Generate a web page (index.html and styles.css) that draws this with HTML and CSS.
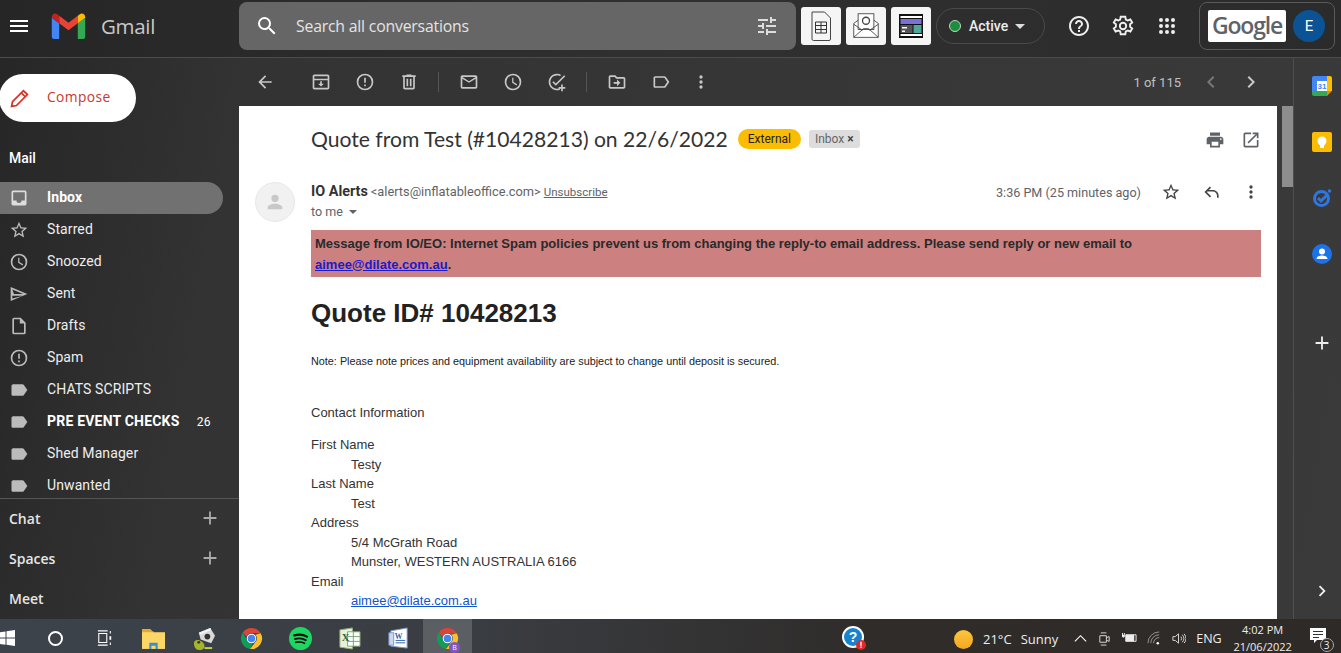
FILE: index.html
```html
<!DOCTYPE html>
<html lang="en">
<head>
    <meta charset="UTF-8">
    <meta name="viewport" content="width=device-width, initial-scale=1.0">
    <title>Gmail - Quote from Test</title>
    <link rel="stylesheet" href="styles.css">
</head>
<body>
    <!-- Shared icons -->
    <svg class="sprite" xmlns="http://www.w3.org/2000/svg">
        <symbol id="i-back" viewBox="0 0 24 24"><path d="M20 11H7.83l5.59-5.59L12 4l-8 8 8 8 1.41-1.41L7.83 13H20v-2z"/></symbol>
        <symbol id="i-archive" viewBox="0 0 24 24"><path d="M20 3H4c-1.1 0-2 .9-2 2v14c0 1.1.9 2 2 2h16c1.1 0 2-.9 2-2V5c0-1.1-.9-2-2-2zM4 5h16v3H4V5zm0 14V10h16v9H4zm9-8h-2v3H8.5l3.5 3.5 3.5-3.5H13v-3z"/></symbol>
        <symbol id="i-report" viewBox="0 0 24 24"><path d="M12 2a10 10 0 1 0 0 20 10 10 0 0 0 0-20zm0 18a8 8 0 1 1 0-16 8 8 0 0 1 0 16zm-1-5h2v2h-2v-2zm0-8h2v6h-2V7z"/></symbol>
        <symbol id="i-delete" viewBox="0 0 24 24"><path d="M15 4V3H9v1H4v2h1v13c0 1.1.9 2 2 2h10c1.1 0 2-.9 2-2V6h1V4h-5zm2 15H7V6h10v13zM9 8h2v9H9V8zm4 0h2v9h-2V8z"/></symbol>
        <symbol id="i-mail" viewBox="0 0 24 24"><path d="M20 4H4c-1.1 0-2 .9-2 2v12c0 1.1.9 2 2 2h16c1.1 0 2-.9 2-2V6c0-1.1-.9-2-2-2zm0 14H4V8l8 5 8-5v10zm-8-7L4 6h16l-8 5z"/></symbol>
        <symbol id="i-clock" viewBox="0 0 24 24"><path d="M12 2a10 10 0 1 0 0 20 10 10 0 0 0 0-20zm0 18a8 8 0 1 1 0-16 8 8 0 0 1 0 16zm.5-13H11v6l5.2 3.1.8-1.3-4.5-2.7V7z"/></symbol>
        <symbol id="i-task" viewBox="0 0 24 24"><path d="M22 5.18 10.59 16.6l-4.24-4.24 1.41-1.41 2.83 2.83 10-10L22 5.18zM12 20a8 8 0 0 1-8-8 8 8 0 0 1 11.6-7.1l1.45-1.45A10 10 0 0 0 2 12a10 10 0 0 0 13.5 9.37v-2.2A8 8 0 0 1 12 20zm7-5h-2v3h-3v2h3v3h2v-3h3v-2h-3v-3z"/></symbol>
        <symbol id="i-move" viewBox="0 0 24 24"><path d="M20 6h-8l-2-2H4c-1.1 0-2 .9-2 2v12c0 1.1.9 2 2 2h16c1.1 0 2-.9 2-2V8c0-1.1-.9-2-2-2zm0 12H4V6h5.17l2 2H20v10zm-8-1 4-4-4-4v3H8v2h4v3z"/></symbol>
        <symbol id="i-label" viewBox="0 0 24 24"><path d="M17.63 5.84C17.27 5.33 16.67 5 16 5L5 5.01C3.9 5.01 3 5.9 3 7v10c0 1.1.9 1.99 2 1.99L16 19c.67 0 1.27-.33 1.63-.84L22 12l-4.37-6.16zM16 17H5V7h11l3.55 5L16 17z"/></symbol>
        <symbol id="i-label-fill" viewBox="0 0 24 24"><path d="M17.63 5.84C17.27 5.33 16.67 5 16 5L5 5.01C3.9 5.01 3 5.9 3 7v10c0 1.1.9 1.99 2 1.99L16 19c.67 0 1.27-.33 1.63-.84L22 12l-4.37-6.16z"/></symbol>
        <symbol id="i-more" viewBox="0 0 24 24"><path d="M12 8a2 2 0 1 0 0-4 2 2 0 0 0 0 4zm0 2a2 2 0 1 0 0 4 2 2 0 0 0 0-4zm0 6a2 2 0 1 0 0 4 2 2 0 0 0 0-4z"/></symbol>
        <symbol id="i-star" viewBox="0 0 24 24"><path d="m22 9.24-7.19-.62L12 2 9.19 8.63 2 9.24l5.46 4.73L5.82 21 12 17.27 18.18 21l-1.63-7.03L22 9.24zM12 15.4l-3.76 2.27 1-4.28-3.32-2.88 4.38-.38L12 6.1l1.71 4.04 4.38.38-3.32 2.88 1 4.28L12 15.4z"/></symbol>
        <symbol id="i-plus" viewBox="0 0 24 24"><path d="M19 13h-6v6h-2v-6H5v-2h6V5h2v6h6v2z"/></symbol>
        <symbol id="i-chrome" viewBox="0 0 24 24">
            <path fill="#db4437" d="M12 1a11 11 0 0 1 9.53 5.5H12A5.5 5.5 0 0 0 6.8 10.2L2.9 5.8A11 11 0 0 1 12 1z"/>
            <path fill="#0f9d58" d="M2.9 5.8l4.76 8.2A5.5 5.5 0 0 0 13.3 17.35L10.4 22.9A11 11 0 0 1 2.9 5.8z"/>
            <path fill="#fbc02d" d="M21.53 6.5A11 11 0 0 1 10.4 22.9L16.8 14.75A5.5 5.5 0 0 0 16 8l5.53-1.5z"/>
            <circle cx="12" cy="12" r="5" fill="#fff"/><circle cx="12" cy="12" r="4" fill="#4285f4"/>
        </symbol>
    </svg>

    <div class="app">
        <!-- Top bar -->
        <header class="topbar">
            <div class="brand">
                <svg class="menu-icon" viewBox="0 0 24 24"><path d="M3 18h18v-2H3v2zm0-5h18v-2H3v2zm0-7v2h18V6H3z"/></svg>
                <svg class="gmail-logo" viewBox="0 0 36 28">
                    <path fill="#4285f4" d="M0 5v20.5A2.5 2.5 0 0 0 2.5 28H8V11L0 5z"/>
                    <path fill="#34a853" d="M28 11v17h5.5a2.5 2.5 0 0 0 2.5-2.5V5l-8 6z"/>
                    <path fill="#ea4335" d="M8 11V3l10 7.5L28 3v8l-10 7.5L8 11z"/>
                    <path fill="#c5221f" d="M0 4.5V5l8 6V3L5.8 1.3C3.3-.6 0 1.3 0 4.5z"/>
                    <path fill="#fbbc04" d="M28 3v8l8-6v-.5c0-3.2-3.3-5.1-5.8-3.2L28 3z"/>
                </svg>
                <span class="gmail-word">Gmail</span>
            </div>
            <div class="search-bar">
                <svg class="search-icon" viewBox="0 0 24 24"><path d="M15.5 14h-.79l-.28-.27A6.471 6.471 0 0 0 16 9.5 6.5 6.5 0 1 0 9.5 16c1.61 0 3.09-.59 4.23-1.57l.27.28v.79l5 4.99L20.49 19l-4.99-5zm-6 0C7.01 14 5 11.99 5 9.5S7.01 5 9.5 5 14 7.01 14 9.5 11.99 14 9.5 14z"/></svg>
                <span class="search-text">Search all conversations</span>
                <svg class="tune-icon" viewBox="0 0 24 24"><path d="M3 17v2h6v-2H3zM3 5v2h10V5H3zm10 16v-2h8v-2h-8v-2h-2v6h2zM7 9v2H3v2h4v2h2V9H7zm14 4v-2H11v2h10zm-6-4h2V7h4V5h-4V3h-2v6z"/></svg>
            </div>
            <div class="ext-icon">
                <svg viewBox="0 0 24 30" width="24" height="30"><path fill="none" stroke="#444" d="M3 1h12.5l6 6v21a1.5 1.5 0 0 1-1.5 1.5H4.5A1.5 1.5 0 0 1 3 28z"/><path fill="none" stroke="#333" d="M6.5 11h11v11h-11zM6.5 14.5h11M6.5 18.5h11M12 11v11"/></svg>
            </div>
            <div class="ext-icon">
                <svg viewBox="0 0 32 32" width="28" height="30"><path fill="#fff" stroke="#444" d="M2 13 16 3l14 10v16H2z"/><rect x="7" y="2" width="18" height="18" fill="#fff" stroke="#444"/><circle cx="16" cy="10" r="4" fill="none" stroke="#444" stroke-width="1.5"/><path fill="none" stroke="#444" d="M2 29l11-10h6l11 10M2 14l10 7M30 14l-10 7"/></svg>
            </div>
            <div class="ext-icon">
                <svg viewBox="0 0 24 24" width="24" height="24"><path fill="#111" d="M0 0h24v24H0z"/><path fill="#fff" d="M1.5 2H23v2H1.5zM1.5 20H23v2H1.5z"/><path fill="#7b70d8" d="M1.5 5h21v5h-21z"/><path fill="#555" d="M1.5 11h12v8h-12z"/><path fill="#4fa69a" d="M14.5 11h8v8h-8z"/><path fill="#fff" d="M3 13h5v1.5H3zM3 16.5h3V18H3z"/></svg>
            </div>
            <div class="status-pill">
                <span class="status-dot"></span>
                <span class="status-text">Active</span>
                <span class="caret"></span>
            </div>
            <div class="top-actions">
                <svg viewBox="0 0 24 24"><path d="M11 18h2v-2h-2v2zm1-16C6.48 2 2 6.48 2 12s4.48 10 10 10 10-4.48 10-10S17.52 2 12 2zm0 18c-4.41 0-8-3.59-8-8s3.59-8 8-8 8 3.59 8 8-3.59 8-8 8zm0-14c-2.21 0-4 1.79-4 4h2c0-1.1.9-2 2-2s2 .9 2 2c0 2-3 1.75-3 5h2c0-2.25 3-2.5 3-5 0-2.21-1.79-4-4-4z"/></svg>
                <svg viewBox="0 0 24 24"><path fill="none" stroke="currentColor" stroke-width="1.9" d="M12 2.8l2.3 0 .5 2.7 2 1 2.6-1 1.8 3-2.1 1.8v2.4l2.1 1.8-1.8 3-2.6-1-2 1-.5 2.7H9.7l-.5-2.7-2-1-2.6 1-1.8-3 2.1-1.8v-2.4L2.8 8.5l1.8-3 2.6 1 2-1 .5-2.7z"/><circle cx="12" cy="12" r="3.2" fill="none" stroke="currentColor" stroke-width="1.9"/></svg>
                <svg viewBox="0 0 24 24"><path d="M6 8a2 2 0 1 0 0-4 2 2 0 0 0 0 4zm6 12a2 2 0 1 0 0-4 2 2 0 0 0 0 4zm-6 0a2 2 0 1 0 0-4 2 2 0 0 0 0 4zm0-6a2 2 0 1 0 0-4 2 2 0 0 0 0 4zm6 0a2 2 0 1 0 0-4 2 2 0 0 0 0 4zm4-8a2 2 0 1 0 4 0 2 2 0 0 0-4 0zm-4 2a2 2 0 1 0 0-4 2 2 0 0 0 0 4zm6 6a2 2 0 1 0 0-4 2 2 0 0 0 0 4zm0 6a2 2 0 1 0 0-4 2 2 0 0 0 0 4z"/></svg>
            </div>
            <div class="account-box">
                <div class="google-word">Google</div>
                <div class="account-avatar">E</div>
            </div>
        </header>

        <div class="workspace">
            <!-- Left sidebar -->
            <aside class="sidebar">
                <div class="compose">
                    <svg viewBox="0 0 24 24"><path fill="none" stroke="#d93025" stroke-width="2" d="M3 21l1-5.500L16.500 3 21 7.500 8.500 20z"/><path stroke="#d93025" stroke-width="2" d="M14 5.500l4.500 4.500"/></svg>
                    <span>Compose</span>
                </div>
                <div class="mail-title">Mail</div>
                <nav class="nav-list">
                    <div class="nav-item active">
                        <svg viewBox="0 0 24 24"><path d="M19 3H5a2 2 0 0 0-2 2v14a2 2 0 0 0 2 2h14a2 2 0 0 0 2-2V5a2 2 0 0 0-2-2zm0 12h-4a3 3 0 0 1-6 0H5V5h14v10z"/></svg>
                        <span>Inbox</span>
                    </div>
                    <div class="nav-item"><svg viewBox="0 0 24 24"><use href="#i-star"/></svg><span>Starred</span></div>
                    <div class="nav-item"><svg viewBox="0 0 24 24"><use href="#i-clock"/></svg><span>Snoozed</span></div>
                    <div class="nav-item">
                        <svg viewBox="0 0 24 24"><path d="M2 3.5v17L22 12 2 3.5zm2 3l12.9 5.5H6l-2-5.5zm0 11V14h12.9L4 17.5z"/></svg>
                        <span>Sent</span>
                    </div>
                    <div class="nav-item">
                        <svg viewBox="0 0 24 24"><path d="M14 2H6a2 2 0 0 0-2 2v16a2 2 0 0 0 2 2h12a2 2 0 0 0 2-2V8l-6-6zm4 18H6V4h7v5h5v11z"/></svg>
                        <span>Drafts</span>
                    </div>
                    <div class="nav-item"><svg viewBox="0 0 24 24"><use href="#i-report"/></svg><span>Spam</span></div>
                    <div class="nav-item"><svg viewBox="0 0 24 24"><use href="#i-label-fill"/></svg><span>CHATS SCRIPTS</span></div>
                    <div class="nav-item unread"><svg viewBox="0 0 24 24"><use href="#i-label-fill"/></svg><span>PRE EVENT CHECKS</span><em>26</em></div>
                    <div class="nav-item"><svg viewBox="0 0 24 24"><use href="#i-label-fill"/></svg><span>Shed Manager</span></div>
                    <div class="nav-item"><svg viewBox="0 0 24 24"><use href="#i-label-fill"/></svg><span>Unwanted</span></div>
                </nav>
                <div class="side-sections">
                    <div class="side-row"><span>Chat</span><svg viewBox="0 0 24 24"><use href="#i-plus"/></svg></div>
                    <div class="side-row"><span>Spaces</span><svg viewBox="0 0 24 24"><use href="#i-plus"/></svg></div>
                    <div class="side-row"><span>Meet</span></div>
                </div>
            </aside>

            <!-- Message column -->
            <main class="main">
                <div class="toolbar">
                    <svg class="tool back" viewBox="0 0 24 24"><use href="#i-back"/></svg>
                    <svg class="tool" viewBox="0 0 24 24"><use href="#i-archive"/></svg>
                    <svg class="tool" viewBox="0 0 24 24"><use href="#i-report"/></svg>
                    <svg class="tool" viewBox="0 0 24 24"><use href="#i-delete"/></svg>
                    <span class="tool-sep"></span>
                    <svg class="tool" viewBox="0 0 24 24"><use href="#i-mail"/></svg>
                    <svg class="tool" viewBox="0 0 24 24"><use href="#i-clock"/></svg>
                    <svg class="tool" viewBox="0 0 24 24"><use href="#i-task"/></svg>
                    <span class="tool-sep"></span>
                    <svg class="tool" viewBox="0 0 24 24"><use href="#i-move"/></svg>
                    <svg class="tool" viewBox="0 0 24 24"><use href="#i-label"/></svg>
                    <svg class="tool tight" viewBox="0 0 24 24"><use href="#i-more"/></svg>
                    <span class="pager">1 of 115</span>
                    <svg class="tool chevron dim" viewBox="0 0 24 24"><path d="M15.41 7.41 14 6l-6 6 6 6 1.41-1.41L10.83 12z"/></svg>
                    <svg class="tool chevron" viewBox="0 0 24 24"><path d="M8.59 16.59 10 18l6-6-6-6-1.41 1.41L13.17 12z"/></svg>
                </div>
                <div class="scroll-wrap">
                    <article class="message">
                        <div class="subject-row">
                            <h1>Quote from Test (#10428213) on 22/6/2022</h1>
                            <span class="badge-external">External</span>
                            <span class="badge-inbox">Inbox <b>×</b></span>
                            <span class="subject-actions">
                                <svg viewBox="0 0 24 24"><path d="M19 8H5c-1.66 0-3 1.34-3 3v6h4v4h12v-4h4v-6c0-1.66-1.34-3-3-3zm-3 11H8v-5h8v5zm3-7c-.55 0-1-.45-1-1s.45-1 1-1 1 .45 1 1-.45 1-1 1zm-1-9H6v4h12V3z"/></svg>
                                <svg viewBox="0 0 24 24"><path d="M19 19H5V5h7V3H5a2 2 0 0 0-2 2v14a2 2 0 0 0 2 2h14c1.1 0 2-.9 2-2v-7h-2v7zM14 3v2h3.59l-9.83 9.83 1.41 1.41L19 6.41V10h2V3h-7z"/></svg>
                            </span>
                        </div>
                        <div class="sender-row">
                            <div class="sender-avatar">
                                <svg viewBox="0 0 24 24"><path d="M12 12a4 4 0 1 0 0-8 4 4 0 0 0 0 8zm0 2c-2.7 0-8 1.3-8 4v2h16v-2c0-2.7-5.3-4-8-4z"/></svg>
                            </div>
                            <div class="sender-info">
                                <div class="sender-line">
                                    <b>IO Alerts</b> <small>&lt;alerts@inflatableoffice.com&gt;</small> <u>Unsubscribe</u>
                                </div>
                                <div class="to-line">to me <span class="caret small"></span></div>
                            </div>
                            <div class="sender-meta">
                                <span class="sent-time">3:36 PM (25 minutes ago)</span>
                                <svg viewBox="0 0 24 24"><use href="#i-star"/></svg>
                                <svg class="reply-icon" viewBox="0 0 24 24"><path d="M9.5 5.5 3 12l6.5 6.5 1.4-1.400L5.8 12l5.100-5.100zM20 19v-2.500c0-4-3.200-7-7-7H6v2h7c2.800 0 5 2.200 5 5V19z"/></svg>
                                <svg viewBox="0 0 24 24"><use href="#i-more"/></svg>
                            </div>
                        </div>
                        <div class="email-body">
                            <div class="notice">Message from IO/EO: Internet Spam policies prevent us from changing the reply-to email address. Please send reply or new email to <a href="#">aimee@dilate.com.au</a>.</div>
                            <h2>Quote ID# 10428213</h2>
                            <p class="note">Note: Please note prices and equipment availability are subject to change until deposit is secured.</p>
                            <p class="contact-title">Contact Information</p>
                            <dl class="contact">
                                <dt>First Name</dt>
                                <dd>Testy</dd>
                                <dt>Last Name</dt>
                                <dd>Test</dd>
                                <dt>Address</dt>
                                <dd>5/4 McGrath Road</dd>
                                <dd>Munster, WESTERN AUSTRALIA 6166</dd>
                                <dt>Email</dt>
                                <dd><a class="mail-link" href="#">aimee@dilate.com.au</a></dd>
                            </dl>
                        </div>
                    </article>
                    <div class="scrollbar"><div class="scroll-thumb"></div></div>
                </div>
            </main>

            <!-- Right add-ons rail -->
            <aside class="rail">
                <svg viewBox="0 0 20 20"><path fill="#4285f4" d="M0 2a2 2 0 0 1 2-2h13v5H5v10H0z"/><path fill="#fbbc04" d="M15 0h3a2 2 0 0 1 2 2v13h-5z"/><path fill="#34a853" d="M0 15h15v5H2a2 2 0 0 1-2-2z"/><path fill="#ea8600" d="M15 15h5l-5 5z"/><path fill="#fff" d="M5 5h10v10H5z"/><text x="10" y="13" class="cal-num">31</text></svg>
                <svg viewBox="0 0 20 20"><rect width="20" height="20" rx="2" fill="#fbbc04"/><circle cx="10" cy="9" r="4.5" fill="#fff"/><path fill="#fff" d="M8 13h4v3H8z"/></svg>
                <svg viewBox="0 0 20 20"><circle cx="9.5" cy="10.5" r="7" fill="none" stroke="#2f76e0" stroke-width="3"/><path fill="none" stroke="#2f76e0" stroke-width="3" d="M6 10l3 3 7-7"/><circle cx="17.5" cy="3" r="1.8" fill="#2f76e0"/></svg>
                <svg viewBox="0 0 20 20"><circle cx="10" cy="10" r="10" fill="#1a73e8"/><circle cx="10" cy="7.5" r="3" fill="#fff"/><path fill="#fff" d="M4.5 15c0-2.5 3-3.5 5.5-3.5s5.5 1 5.5 3.5z"/></svg>
                <span class="rail-sep"></span>
                <svg class="rail-plus" viewBox="0 0 24 24"><use href="#i-plus"/></svg>
                <svg class="rail-next" viewBox="0 0 24 24"><path d="M8.59 16.59 10 18l6-6-6-6-1.41 1.41L13.17 12z"/></svg>
            </aside>
        </div>
    </div>

    <!-- Windows taskbar -->
    <footer class="taskbar">
        <div class="task-start">
            <svg viewBox="0 0 16 16"><path d="M0 2.3 6.5 1.4v6.2H0zM7.5 1.2 16 0v7.6H7.5zM0 8.5h6.5v6.2L0 13.8zM7.5 8.5H16V16l-8.5-1.2z"/></svg>
        </div>
        <div class="task-slot"><span class="cortana"></span></div>
        <div class="task-slot">
            <svg viewBox="0 0 18 18" class="task-view"><path fill="none" stroke="#fff" stroke-width="1.2" d="M1 1h11M1 17h11M2 4h9v10H2zM15 1v3M15 14v3"/><path fill="#fff" d="M14 7h2v4h-2z"/></svg>
        </div>
        <div class="task-slot">
            <svg viewBox="0 0 22 20" class="task-app"><path fill="#e8a825" d="M0 1h8l2 2h1v2H0z"/><path fill="#fcd768" d="M0 4h22v16H0z"/><path fill="#3a8fc7" d="M7 14h8v6h-2v-3H9v3H7z"/></svg>
        </div>
        <div class="task-slot">
            <svg viewBox="0 0 24 24" class="task-app camera"><path fill="#d9d9d9" d="M6 6l12-5 5 8-4 8-11-4z"/><path fill="#f2f2f2" d="M6 6l12-5 1 2L8 8z"/><circle cx="15" cy="10" r="3" fill="#333"/><path fill="#a5b52a" d="M1 17c0-3 3-4 6-3s5 3 5 6-3 4-6 4-5-3-5-7z"/><circle cx="6" cy="16" r="1.5" fill="#333"/><path fill="#c8d048" d="M12 21h8v2h-8z"/></svg>
        </div>
        <div class="task-slot"><svg viewBox="0 0 24 24" class="task-app"><use href="#i-chrome"/></svg></div>
        <div class="task-slot">
            <svg viewBox="0 0 24 24" class="task-app"><circle cx="12" cy="12" r="12" fill="#1ed760"/><path fill="none" stroke="#111" stroke-linecap="round" stroke-width="2.3" d="M5.5 8.8c4.5-1.3 9.5-1 13.3 1.2"/><path fill="none" stroke="#111" stroke-linecap="round" stroke-width="2" d="M6.3 12.5c3.8-1 8-.7 11.2 1.2"/><path fill="none" stroke="#111" stroke-linecap="round" stroke-width="1.7" d="M7 16c3-.8 6.5-.5 9.2 1"/></svg>
        </div>
        <div class="task-slot">
            <svg viewBox="0 0 24 24" class="task-app"><path fill="#e8f0dc" stroke="#8fb27a" d="M2 3l13-2v22L2 21z"/><path fill="#fff" stroke="#7aa56a" d="M10 5h13v15H10z"/><path stroke="#7aa56a" d="M10 10h13M10 15h13M16 5v15"/><text x="4" y="15" class="excel-x">X</text></svg>
        </div>
        <div class="task-slot">
            <svg viewBox="0 0 24 24" class="task-app"><path fill="#fff" stroke="#7a98cc" d="M4 4l17-3v21L4 20z"/><path fill="#c9d8f0" stroke="#7a98cc" d="M2 6h5v13H2z"/><path stroke="#2f5fa8" d="M9 14h10M9 16.5h10"/><text x="8" y="12" class="word-w">W</text></svg>
        </div>
        <div class="task-slot current">
            <svg viewBox="0 0 24 24" class="task-app"><use href="#i-chrome"/></svg>
            <span class="profile-b">B</span>
        </div>

        <div class="task-help">
            <svg viewBox="0 0 24 24"><circle cx="11" cy="11" r="11" fill="#fff"/><circle cx="11" cy="11" r="9" fill="#1583cf"/><text x="11" y="16" class="help-q">?</text><circle cx="19" cy="19" r="5" fill="#e02a2a"/><path fill="#fff" d="M18.3 15.8h1.4v4h-1.4zM18.3 20.6h1.4V22h-1.4z"/></svg>
        </div>
        <div class="weather">
            <span class="sun"></span>
            <span class="temp">21°C</span>
            <span class="sky">Sunny</span>
        </div>
        <div class="tray">
            <svg viewBox="0 0 16 16" class="tray-up"><path fill="none" stroke="#fff" stroke-width="1.2" d="M2 11l6-6 6 6"/></svg>
            <svg viewBox="0 0 16 16"><path fill="none" stroke="#ddd" d="M3 5h7v7H3zM10 7l3-1v5l-3-1M4 2h6M4 15h6"/></svg>
            <svg viewBox="0 0 18 16" class="tray-batt"><path fill="none" stroke="#eee" d="M5 4h11v7H5z"/><path fill="#eee" d="M5 4h9v7H5zM1 2h1v2H1zM3 2h1v2H3zM1 4h3v2L3 7H2L1 6z"/></svg>
            <svg viewBox="0 0 16 16"><path fill="none" stroke="#999" d="M1 13a12 12 0 0 1 12-12M4 13a9 9 0 0 1 9-9M7 13a6 6 0 0 1 6-6"/><circle cx="11.5" cy="13" r="1.4" fill="#fff"/></svg>
            <svg viewBox="0 0 16 16"><path fill="none" stroke="#ddd" d="M2 6h2.5L8 3v10l-3.5-3H2zM10.5 6a3 3 0 0 1 0 4M12 4a6 6 0 0 1 0 8M14 3a8 8 0 0 1 0 10"/></svg>
        </div>
        <span class="lang">ENG</span>
        <div class="clock">
            <div>4:02 PM</div>
            <div>21/06/2022</div>
        </div>
        <div class="notify">
            <svg viewBox="0 0 18 18"><path fill="#fff" d="M1 1h16v12H8l-3 3v-3H1z"/><path stroke="#333" d="M4 4.5h10M4 7.5h10M4 10.5h6"/></svg>
            <span class="notify-count">3</span>
        </div>
    </footer>
</body>
</html>
```

FILE: styles.css
```css
* {
    margin: 0;
    padding: 0;
    box-sizing: border-box;
}

html, body {
    width: 1341px;
    height: 653px;
    overflow: hidden;
}

body {
    display: flex;
    flex-direction: column;
    font-family: Roboto, "Liberation Sans", sans-serif;
    background-color: #333;
    color: #fff;
}

svg {
    fill: currentColor;
    flex-shrink: 0;
}

.sprite {
    display: none;
}

.app {
    height: 619px;
    display: flex;
    flex-direction: column;
    background: linear-gradient(100deg, #262626 0%, #333 18%, #3a3a3a 100%);
    overflow: hidden;
}

/* Top bar */
.topbar {
    height: 58px;
    flex-shrink: 0;
    display: flex;
    align-items: flex-start;
    border-bottom: 1px solid #4c4c4c;
    background: linear-gradient(90deg, #262626 0%, #303030 50%, #2b2b2b 100%);
}

.brand {
    width: 239px;
    height: 52px;
    display: flex;
    align-items: center;
    flex-shrink: 0;
}

.menu-icon {
    width: 24px;
    height: 24px;
    margin-left: 7px;
    color: #fff;
}

.gmail-logo {
    width: 35px;
    height: 26px;
    margin-left: 20px;
}

.gmail-word {
    margin-left: 15px;
    font-family: "Open Sans", sans-serif;
    font-size: 20.5px;
    color: #c8c8c8;
    letter-spacing: -0.3px;
}

.search-bar {
    width: 557px;
    height: 48px;
    margin-top: 2px;
    background-color: #666;
    border-radius: 8px;
    display: flex;
    align-items: center;
    padding: 0 17px 0 16px;
    flex-shrink: 0;
}

.search-icon {
    width: 24px;
    height: 24px;
}

.search-text {
    margin-left: 17px;
    font-family: "Open Sans", sans-serif;
    font-size: 15.8px;
    letter-spacing: -0.2px;
    color: #e4e4e4;
    flex-grow: 1;
}

.tune-icon {
    width: 24px;
    height: 24px;
    color: #ddd;
}

.ext-icon {
    width: 40px;
    height: 38px;
    margin: 7px 0 0 5px;
    background-color: #f5f5f5;
    border-radius: 3px;
    display: flex;
    align-items: center;
    justify-content: center;
}

.status-pill {
    width: 109px;
    height: 36px;
    margin: 8px 0 0 5px;
    border: 1px solid #4a4a4a;
    border-radius: 18px;
    display: flex;
    align-items: center;
    padding-left: 12px;
}

.status-dot {
    width: 12px;
    height: 12px;
    border-radius: 50%;
    background-color: #1e8e3e;
    border: 1px solid #b8d8c0;
}

.status-text {
    margin-left: 8px;
    font-size: 14px;
    font-weight: 500;
    color: #eee;
}

.caret {
    width: 0;
    height: 0;
    margin-left: 7px;
    border-left: 5px solid transparent;
    border-right: 5px solid transparent;
    border-top: 5px solid #ddd;
}

.top-actions {
    display: flex;
    gap: 20px;
    margin: 14px 0 0 22px;
    color: #eee;
}

.top-actions svg {
    width: 24px;
    height: 24px;
}

.account-box {
    width: 136px;
    height: 48px;
    margin: 2px 0 0 20px;
    border: 1px solid #5a5a5a;
    border-radius: 8px;
    display: flex;
    align-items: center;
    padding-left: 8px;
}

.google-word {
    width: 78px;
    height: 32px;
    background-color: #fff;
    border-radius: 2px;
    color: #5f6368;
    font-family: "Open Sans", sans-serif;
    font-size: 23px;
    font-weight: 600;
    line-height: 31px;
    text-align: center;
    letter-spacing: -1.2px;
}

.account-avatar {
    width: 32px;
    height: 32px;
    margin-left: 7px;
    background-color: #0b5394;
    border-radius: 50%;
    text-align: center;
    font-size: 15px;
    line-height: 33px;
    color: #fff;
}

.workspace {
    flex-grow: 1;
    display: flex;
    min-height: 0;
}

/* Left sidebar */
.sidebar {
    width: 239px;
    flex-shrink: 0;
    display: flex;
    flex-direction: column;
}

.compose {
    width: 137px;
    height: 48px;
    margin: 16px 0 0 -1px;
    background-color: #fff;
    border-radius: 24px;
    display: flex;
    align-items: center;
    padding-left: 10px;
    color: #c5392f;
    font-family: "Open Sans", sans-serif;
    font-size: 13.8px;
    letter-spacing: 0.4px;
}

.compose span {
    margin-bottom: 3px;
}

.compose svg {
    width: 21px;
    height: 21px;
    margin-right: 17px;
}

.mail-title {
    margin: 28px 0 0 9px;
    font-size: 14px;
    font-weight: 500;
    line-height: 16px;
}

.nav-list {
    margin-top: 16px;
    height: 317px;
    overflow: hidden;
    border-bottom: 1px solid #555;
}

.nav-item {
    width: 223px;
    height: 32px;
    display: flex;
    align-items: center;
    padding-left: 9px;
    font-size: 14px;
    letter-spacing: 0.1px;
    color: #eee;
    border-radius: 0 16px 16px 0;
}

.nav-item span {
    margin-bottom: 2px;
}

.nav-item svg {
    width: 20px;
    height: 20px;
    margin-right: 18px;
    color: #bbb;
}

.nav-item.active {
    background-color: #717171;
    font-weight: 700;
    color: #fff;
}

.nav-item.active svg {
    color: #ddd;
}

.nav-item.unread {
    font-weight: 700;
    color: #fff;
    letter-spacing: 0.2px;
}

.nav-item em {
    margin-left: auto;
    margin-right: 12px;
    font-style: normal;
    font-weight: 400;
    font-size: 12px;
    letter-spacing: 0.4px;
}

.side-sections {
    display: flex;
    flex-direction: column;
    margin-top: -1px;
}

.side-row {
    height: 40px;
    display: flex;
    align-items: center;
    justify-content: space-between;
    padding: 0 18px 0 9px;
    font-family: "Open Sans", sans-serif;
    font-size: 14px;
    font-weight: 600;
    color: #e6e6e6;
}

.side-row svg {
    width: 22px;
    height: 22px;
    color: #aaa;
}

/* Main column */
.main {
    flex-grow: 1;
    display: flex;
    flex-direction: column;
    min-width: 0;
}

.toolbar {
    height: 48px;
    flex-shrink: 0;
    display: flex;
    align-items: center;
    padding: 0 14px 0 16px;
    color: #c8c8c8;
}

.tool {
    width: 20px;
    height: 20px;
    margin-right: 24px;
}

.tool.back {
    margin-right: 36px;
}

.tool-sep {
    width: 1px;
    height: 20px;
    background-color: #555;
    margin: 0 20px 0 -5px;
}

.tool.tight {
    margin-left: -4px;
    margin-right: 0;
}

.pager {
    margin-left: auto;
    margin-right: 18px;
    font-size: 13px;
    color: #c0c0c0;
}

.chevron {
    width: 24px;
    height: 24px;
    margin-right: 16px;
}

.chevron.dim {
    color: #777;
}

.scroll-wrap {
    flex-grow: 1;
    display: flex;
    min-height: 0;
}

.message {
    width: 1038px;
    flex-shrink: 0;
    background-color: #fff;
    color: #202124;
    overflow: hidden;
}

.subject-row {
    height: 66px;
    display: flex;
    align-items: center;
    padding: 0 16px 0 72px;
}

.subject-row h1 {
    margin-bottom: 2px;
    font-family: Lato, sans-serif;
    font-size: 21.1px;
    font-weight: 400;
    color: #333;
}

.badge-external {
    margin-left: 10px;
    height: 20px;
    padding: 0 10px;
    background-color: #fbbc04;
    border-radius: 10px;
    font-size: 12px;
    line-height: 20px;
    color: #222;
}

.badge-inbox {
    margin-left: 8px;
    height: 18px;
    padding: 0 6px;
    background-color: #ddd;
    border-radius: 3px;
    font-size: 12px;
    line-height: 18px;
    color: #666;
}

.badge-inbox b {
    color: #444;
}

.subject-actions {
    margin: 2px 0 0 auto;
    display: flex;
    gap: 16px;
    color: #5f6368;
}

.subject-actions svg {
    width: 20px;
    height: 20px;
}

.sender-row {
    display: flex;
    height: 58px;
    padding-left: 16px;
}

.sender-avatar {
    width: 40px;
    height: 40px;
    margin-top: 10px;
    border-radius: 50%;
    background-color: #f1f1f1;
    border: 1px solid #e8e8e8;
    display: flex;
    align-items: center;
    justify-content: center;
    color: #c8c8c8;
}

.sender-avatar svg {
    width: 22px;
    height: 22px;
}

.sender-info {
    margin-left: 16px;
    padding-top: 11px;
    font-size: 12px;
}

.sender-line {
    line-height: 17px;
    color: #5f6368;
}

.sender-line b {
    font-size: 14.4px;
    color: #333;
}

.sender-line small {
    font-size: 12.8px;
}

.sender-line u {
    font-size: 11.5px;
}

.to-line {
    margin-top: 3px;
    font-size: 12.5px;
    line-height: 16px;
    color: #5f6368;
    display: flex;
    align-items: center;
}

.caret.small {
    margin-left: 6px;
    border-left-width: 4px;
    border-right-width: 4px;
    border-top: 4px solid #5f6368;
}

.sender-meta {
    margin-left: auto;
    height: 20px;
    margin-top: 10px;
    display: flex;
    align-items: center;
    color: #444;
    padding-right: 16px;
}

.sent-time {
    font-size: 12.6px;
    color: #5f6368;
    margin-right: 20px;
}

.sender-meta svg {
    width: 20px;
    height: 20px;
    margin-left: 20px;
}

.sent-time + svg {
    margin-left: 0;
}

.sender-meta .reply-icon {
    margin: 0 -1px 0 21px;
}

.email-body {
    padding: 0 16px 0 72px;
    font-family: "Liberation Sans", Arial, sans-serif;
    font-size: 13px;
}

.notice {
    padding: 4px 3px 2px 4px;
    background-color: #cd8080;
    color: #2a2a2a;
    font-size: 13px;
    font-weight: 700;
    line-height: 20.5px;
}

.notice a {
    color: #1a1ad0;
}

.email-body h2 {
    margin-top: 21px;
    font-size: 26px;
    line-height: 30px;
    color: #222;
}

.note {
    margin-top: 27px;
    font-size: 10.83px;
    line-height: 12px;
    color: #222;
}

.contact-title {
    margin-top: 39px;
    line-height: 14px;
    color: #333;
}

.contact {
    margin-top: 15px;
    line-height: 19.5px;
    color: #333;
}

.contact dd {
    margin-left: 40px;
}

.mail-link {
    color: #1155cc;
}

.scrollbar {
    width: 16px;
    padding-left: 5px;
    flex-shrink: 0;
}

.scroll-thumb {
    width: 11px;
    height: 81px;
    background-color: #8d8d8d;
}

/* Right rail */
.rail {
    width: 48px;
    margin-left: auto;
    flex-shrink: 0;
    border-left: 1px solid #4f4f4f;
    display: flex;
    flex-direction: column;
    align-items: center;
    padding: 18px 0 0 8px;
}

.rail svg {
    width: 20px;
    height: 20px;
    margin-bottom: 36px;
}

.cal-num {
    font: 700 8px "Liberation Sans", sans-serif;
    fill: #4285f4;
    text-anchor: middle;
}

.rail-sep {
    width: 20px;
    height: 1px;
    background-color: #555;
    margin: -2px 0 34px;
}

.rail .rail-plus {
    width: 22px;
    height: 22px;
    color: #eee;
    margin-bottom: 226px;
}

.rail .rail-next {
    width: 22px;
    height: 22px;
    color: #eee;
}

/* Taskbar */
.taskbar {
    height: 34px;
    flex-shrink: 0;
    display: flex;
    align-items: center;
    background: linear-gradient(90deg, #3c434b 0%, #3a3d42 35%, #2f2c2a 65%, #2e2a28 100%);
    font-family: "Open Sans", sans-serif;
    color: #eee;
}

.task-start {
    width: 32px;
    margin: 4px 0 0 -1px;
}

.task-start svg {
    width: 16px;
    height: 16px;
    display: block;
    color: #fff;
}

.task-slot {
    width: 49px;
    height: 34px;
    padding-top: 4px;
    display: flex;
    align-items: center;
    justify-content: center;
    position: relative;
}

.task-slot.current {
    background-color: #5b5e63;
}

.task-app {
    width: 23px;
    height: 23px;
}

.camera {
    margin-left: 3px;
}

.cortana {
    width: 15px;
    height: 15px;
    border: 2px solid #fff;
    border-radius: 50%;
}

.task-view {
    width: 16px;
    height: 16px;
}

.profile-b {
    position: absolute;
    right: 12px;
    bottom: 0;
    width: 11px;
    height: 11px;
    border-radius: 50%;
    background-color: #7e57c2;
    font-size: 7px;
    line-height: 11px;
    text-align: center;
    color: #fff;
}

.excel-x {
    font: 700 11px "Liberation Serif", serif;
    fill: #1e6b2f;
}

.word-w {
    font: 700 8px "Liberation Serif", serif;
    fill: #2f5fa8;
}

.help-q {
    font: 700 14px "Liberation Sans", sans-serif;
    fill: #fff;
    text-anchor: middle;
}

.task-help {
    margin: 4px 0 0 370px;
    width: 24px;
    height: 24px;
}

.task-help svg {
    width: 24px;
    height: 24px;
}

.weather {
    display: flex;
    align-items: center;
    margin: 6px 0 0 88px;
    font-size: 13px;
}

.sun {
    width: 19px;
    height: 19px;
    border-radius: 50%;
    background: linear-gradient(180deg, #fcc63a, #f5a623);
}

.temp {
    margin-left: 10px;
}

.sky {
    margin-left: 9px;
}

.tray {
    display: flex;
    align-items: center;
    gap: 9px;
    margin: 5px 0 0 15px;
}

.tray svg {
    width: 15px;
    height: 15px;
}

.tray .tray-batt {
    width: 17px;
}

.lang {
    margin: 4px 0 0 10px;
    font-size: 12.5px;
}

.clock {
    margin: 4px 0 0 10px;
    width: 62px;
    text-align: center;
    font-size: 11px;
    line-height: 17px;
}

.notify {
    position: relative;
    margin: 3px 0 0 15px;
    width: 22px;
    height: 22px;
}

.notify svg {
    width: 18px;
    height: 18px;
}

.notify-count {
    position: absolute;
    right: -3px;
    bottom: -3px;
    width: 14px;
    height: 14px;
    border: 1px solid #aaa;
    border-radius: 50%;
    background-color: #2e2a28;
    text-align: center;
    font-size: 10px;
    line-height: 12px;
}
```
